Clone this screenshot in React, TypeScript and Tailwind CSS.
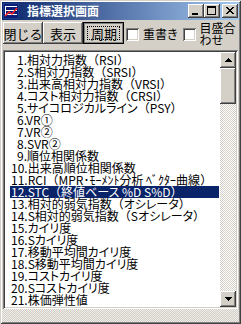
import React from "react";

const raised =
  "shadow-[inset_-1px_-1px_0_#404040,inset_1px_1px_0_#ffffff,inset_-2px_-2px_0_#808080,inset_2px_2px_0_#d4d0c8]";
const sunken =
  "shadow-[inset_1px_1px_0_#808080,inset_-1px_-1px_0_#ffffff,inset_2px_2px_0_#404040,inset_-2px_-2px_0_#d4d0c8]";
const checker =
  "bg-[repeating-conic-gradient(#ffffff_0_25%,#d4d0c8_0_50%)] bg-[length:2px_2px]";

const items = [
  "1.相対力指数（RSI）",
  "2.S相対力指数（SRSI）",
  "3.出来高相対力指数（VRSI）",
  "4.コスト相対力指数（CRSI）",
  "5.サイコロジカルライン（PSY）",
  "6.VR①",
  "7.VR②",
  "8.SVR②",
  "9.順位相関係数",
  "10.出来高順位相関係数",
  "11.RCI（MPR･ﾓｰﾒﾝﾄ分析 ﾍﾞｸﾀｰ曲線）",
  "12.STC（終値ベース %D  S%D）",
  "13.相対的弱気指数（オシレータ）",
  "14.S相対的弱気指数（Sオシレータ）",
  "15.カイリ度",
  "16.Sカイリ度",
  "17.移動平均間カイリ度",
  "18.S移動平均間カイリ度",
  "19.コストカイリ度",
  "20.Sコストカイリ度",
  "21.株価弾性値",
];

function ItemText({ text }: { text: string }) {
  const parts = text.split(/([（）])/);
  return (
    <>
      {parts.map((p, i) =>
        p === "（" || p === "）" ? (
          <span key={i} className="[font-feature-settings:normal]">
            {p}
          </span>
        ) : (
          <span key={i}>{p}</span>
        )
      )}
    </>
  );
}

function TitleIcon() {
  return (
    <svg width="16" height="16" viewBox="0 0 16 16" shapeRendering="crispEdges">
      <rect x="0" y="0" width="16" height="16" fill="#1c3c8c" />
      <rect x="1" y="1" width="14" height="14" fill="#0a1e78" />
      <rect x="2" y="3" width="12" height="1" fill="#ffffff" />
      <rect x="2" y="7" width="12" height="1" fill="#ffffff" />
      <rect x="2" y="11" width="12" height="1" fill="#ffffff" />
      <rect x="2" y="3" width="1" height="10" fill="#ffffff" />
      <polyline points="2,13 6,9 9,11 14,5" fill="none" stroke="#ff2020" strokeWidth="1.5" shapeRendering="auto" />
    </svg>
  );
}

function CapButton({ kind }: { kind: "min" | "max" | "close" }) {
  return (
    <div className={`w-[16px] h-[14px] bg-[#d4d0c8] ${raised} flex items-center justify-center`}>
      <svg width="16" height="14" viewBox="0 0 16 14" shapeRendering="crispEdges">
        {kind === "min" && <rect x="4" y="9" width="6" height="2" fill="#000" />}
        {kind === "max" && (
          <>
            <rect x="3" y="2" width="9" height="2" fill="#000" />
            <rect x="3" y="2" width="1" height="9" fill="#000" />
            <rect x="11" y="2" width="1" height="9" fill="#000" />
            <rect x="3" y="10" width="9" height="1" fill="#000" />
          </>
        )}
        {kind === "close" && (
          <g fill="#000">
            <rect x="4" y="3" width="2" height="1" />
            <rect x="10" y="3" width="2" height="1" />
            <rect x="5" y="4" width="2" height="1" />
            <rect x="9" y="4" width="2" height="1" />
            <rect x="6" y="5" width="4" height="1" />
            <rect x="7" y="6" width="2" height="1" />
            <rect x="6" y="7" width="4" height="1" />
            <rect x="5" y="8" width="2" height="1" />
            <rect x="9" y="8" width="2" height="1" />
            <rect x="4" y="9" width="2" height="1" />
            <rect x="10" y="9" width="2" height="1" />
          </g>
        )}
      </svg>
    </div>
  );
}

function Arrow({ up }: { up: boolean }) {
  return (
    <div className={`w-[16px] h-[16px] bg-[#d4d0c8] ${raised} flex items-center justify-center`}>
      <svg width="7" height="4" viewBox="0 0 7 4" shapeRendering="crispEdges">
        {up ? (
          <polygon points="3.5,0 7,4 0,4" fill="#000" />
        ) : (
          <polygon points="0,0 7,0 3.5,4" fill="#000" />
        )}
      </svg>
    </div>
  );
}

export default function App() {
  return (
    <div
      className={`w-[241px] h-[324px] bg-[#d4d0c8] p-[2px] flex flex-col overflow-hidden font-['Noto_Sans_CJK_JP',sans-serif] text-black shadow-[inset_1px_1px_0_#d4d0c8,inset_-1px_-1px_0_#404040,inset_2px_2px_0_#ffffff,inset_-2px_-2px_0_#808080]`}
    >
      {/* title bar */}
      <div className="h-[18px] flex items-center bg-[linear-gradient(to_right,#0a246a,#a6caf0)] pl-[1px] pr-[1px] shrink-0">
        <TitleIcon />
        <span className="ml-[8px] text-white font-bold text-[12px] leading-[18px]">
          指標選択画面
        </span>
        <div className="ml-auto flex items-center">
          <CapButton kind="min" />
          <CapButton kind="max" />
          <div className="ml-[2px]">
            <CapButton kind="close" />
          </div>
        </div>
      </div>

      {/* toolbar */}
      <div className="h-[30px] flex items-start pt-[2px] pl-[1px] shrink-0 text-[12px]">
        <div className={`w-[40px] h-[22px] ${raised} flex items-center justify-center text-[13px] leading-none`}>
          閉じる
        </div>
        <div className={`w-[40px] h-[22px] ${raised} flex items-center justify-center text-[13px] leading-none`}>
          表示
        </div>
        <div className="w-[41px] h-[22px] border border-black shadow-[inset_1px_1px_0_#808080,inset_-1px_-1px_0_#808080] flex items-center justify-center p-[3px]">
          <div className="w-full h-full border border-dotted border-black flex items-center justify-center text-[13px] leading-none pt-[1px] pl-[1px]">
            周期
          </div>
        </div>
        <div className={`ml-[2px] mt-[6px] w-[13px] h-[13px] bg-white ${sunken}`} />
        <span className="ml-[4px] mt-[5px] leading-[14px] [font-feature-settings:'palt']">重書き</span>
        <div className={`ml-[5px] mt-[6px] w-[13px] h-[13px] bg-white ${sunken}`} />
        <span className="ml-[4px] leading-[12px] [font-feature-settings:'palt']">
          目盛合
          <br />
          わせ
        </span>
      </div>

      {/* list box */}
      <div className={`mx-[1px] h-[259px] bg-white ${sunken} p-[2px] flex shrink-0`}>
        <div className="flex-1 min-w-0 pt-[2px] pl-[5px] pr-[1px] text-[12px] [font-feature-settings:'palt']">
          {items.map((t, i) => (
            <div
              key={i}
              className={`h-[12px] leading-[12px] whitespace-nowrap pl-[1px] ${
                i === 11 ? "bg-[#0a246a] text-white" : ""
              }`}
            >
              <span className={i < 9 ? "pl-[6px]" : ""}>
                <ItemText text={t} />
              </span>
            </div>
          ))}
        </div>
        <div className="w-[16px] flex flex-col shrink-0">
          <Arrow up={true} />
          <div className={`h-[36px] bg-[#d4d0c8] ${raised}`} />
          <div className={`flex-1 ${checker}`} />
          <Arrow up={false} />
        </div>
      </div>

      {/* bottom area */}
      <div className={`flex-1 ${checker} opacity-60`} />
    </div>
  );
}
